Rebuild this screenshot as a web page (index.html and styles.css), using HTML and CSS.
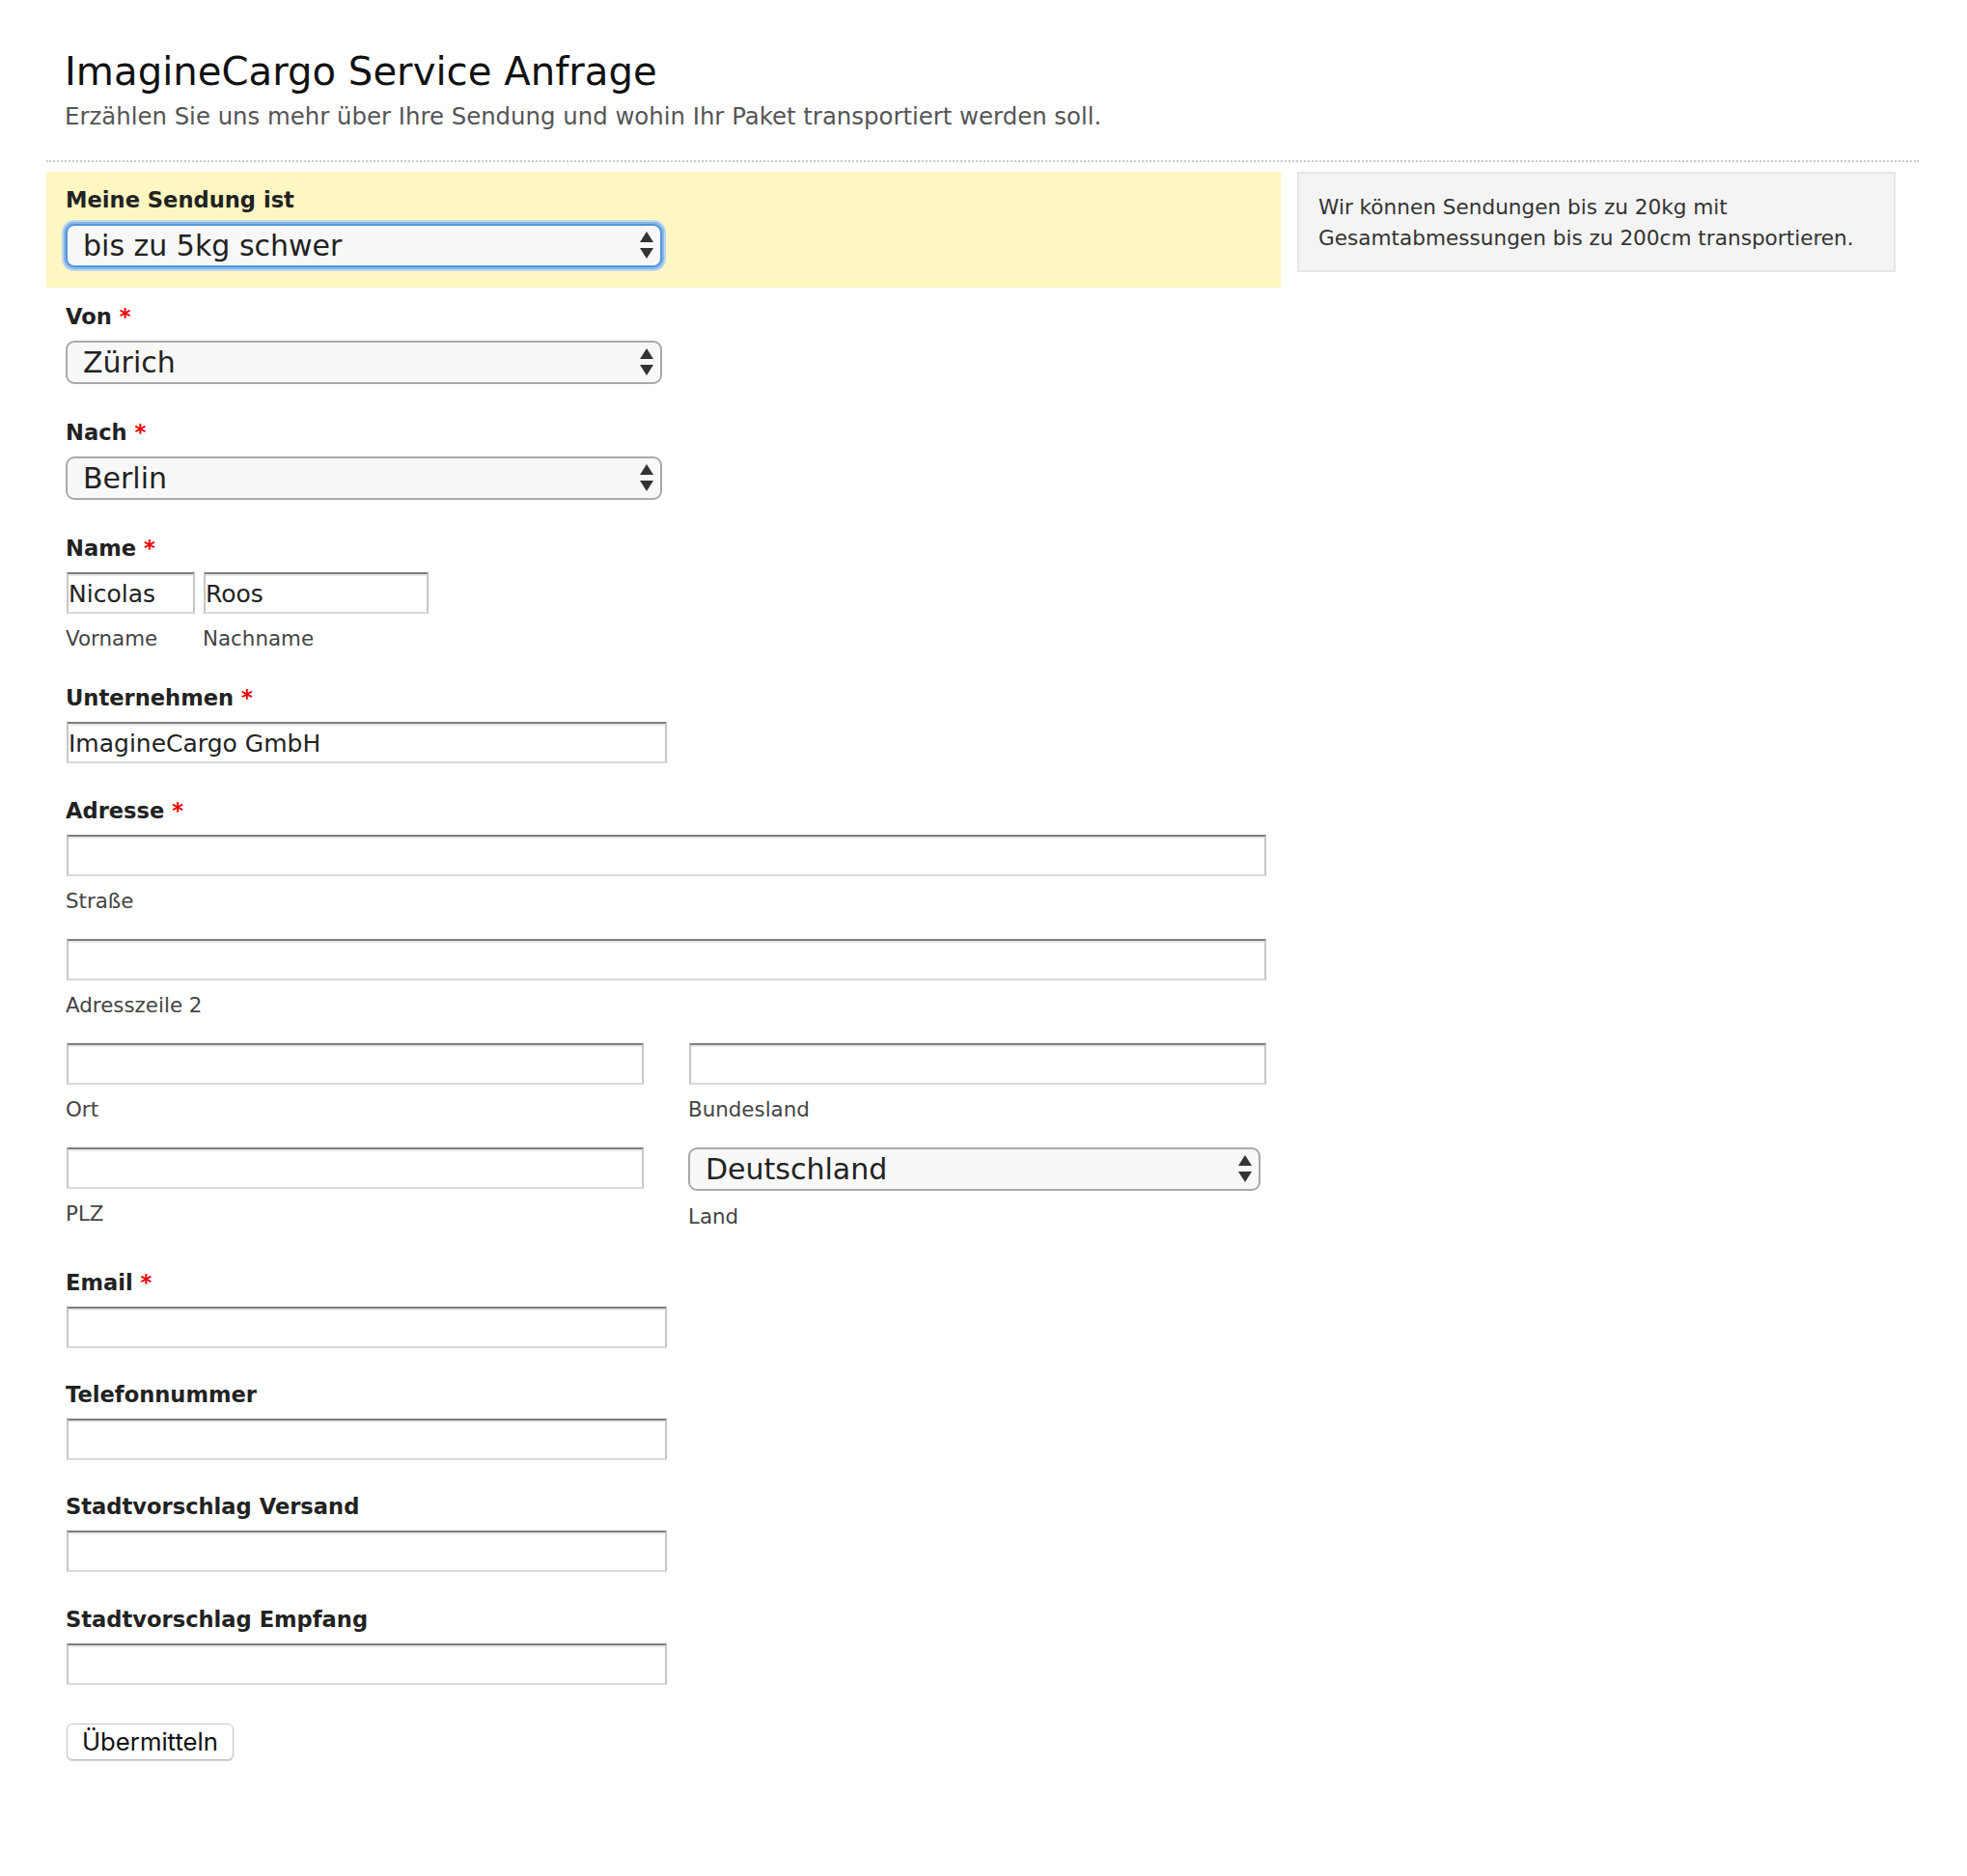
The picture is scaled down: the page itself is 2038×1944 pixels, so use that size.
FILE: index.html
```html
<!DOCTYPE html>
<html lang="de">
<head>
<meta charset="utf-8">
<title>ImagineCargo Service Anfrage</title>
<link rel="stylesheet" href="styles.css">
</head>
<body>
<div class="page">
  <header class="page-head">
    <h1 class="title">ImagineCargo Service Anfrage</h1>
    <p class="subtitle">Erzählen Sie uns mehr über Ihre Sendung und wohin Ihr Paket transportiert werden soll.</p>
  </header>
  <div class="divider"></div>
  <div class="layout">
    <form class="main">
      <div class="field highlight">
        <label class="label" for="weight">Meine Sendung ist</label>
        <span class="select-wrap"><select id="weight" class="select focused"><option>bis zu 5kg schwer</option></select></span>
      </div>

      <div class="field after-select">
        <label class="label" for="from">Von <span class="req">*</span></label>
        <span class="select-wrap"><select id="from" class="select"><option>Zürich</option></select></span>
      </div>

      <div class="field after-select">
        <label class="label" for="to">Nach <span class="req">*</span></label>
        <span class="select-wrap"><select id="to" class="select"><option>Berlin</option></select></span>
      </div>

      <div class="field name-field">
        <label class="label" for="first">Name <span class="req">*</span></label>
        <div class="name-row">
          <div class="col">
            <input id="first" class="input w-first" type="text" value="Nicolas">
            <span class="sublabel">Vorname</span>
          </div>
          <div class="col">
            <input id="last" class="input w-last" type="text" value="Roos">
            <span class="sublabel">Nachname</span>
          </div>
        </div>
      </div>

      <div class="field">
        <label class="label" for="company">Unternehmen <span class="req">*</span></label>
        <input id="company" class="input w-md" type="text" value="ImagineCargo GmbH">
      </div>

      <div class="field address">
        <label class="label" for="street">Adresse <span class="req">*</span></label>
        <div class="addr-line">
          <input id="street" class="input w-full" type="text">
          <span class="sublabel">Straße</span>
        </div>
        <div class="addr-line">
          <input id="street2" class="input w-full" type="text">
          <span class="sublabel">Adresszeile 2</span>
        </div>
        <div class="addr-line addr-row">
          <div class="col">
            <input id="city" class="input w-half" type="text">
            <span class="sublabel">Ort</span>
          </div>
          <div class="col">
            <input id="state" class="input w-half" type="text">
            <span class="sublabel">Bundesland</span>
          </div>
        </div>
        <div class="addr-row last">
          <div class="col">
            <input id="zip" class="input w-half" type="text">
            <span class="sublabel">PLZ</span>
          </div>
          <div class="col">
            <span class="select-wrap"><select id="country" class="select w-country"><option>Deutschland</option></select></span>
            <span class="sublabel after-sel">Land</span>
          </div>
        </div>
      </div>

      <div class="field tight">
        <label class="label" for="email">Email <span class="req">*</span></label>
        <input id="email" class="input w-md" type="text">
      </div>

      <div class="field tight">
        <label class="label" for="phone">Telefonnummer</label>
        <input id="phone" class="input w-md" type="text">
      </div>

      <div class="field">
        <label class="label" for="cityfrom">Stadtvorschlag Versand</label>
        <input id="cityfrom" class="input w-md" type="text">
      </div>

      <div class="field last-field">
        <label class="label" for="cityto">Stadtvorschlag Empfang</label>
        <input id="cityto" class="input w-md" type="text">
      </div>

      <div class="actions">
        <button type="button" class="btn">Übermitteln</button>
      </div>
    </form>

    <aside class="help">
      Wir können Sendungen bis zu 20kg mit Gesamtabmessungen bis zu 200cm transportieren.
    </aside>
  </div>
</div>
</body>
</html>
```

FILE: styles.css
```css
html, body {
  margin: 0;
  padding: 0;
  background: #ffffff;
}

body {
  font-family: "DejaVu Sans", "Noto Sans", sans-serif;
  color: #222222;
}

.page {
  padding: 0 50px 60px 48px;
}

.page-head {
  padding: 50px 0 0 19px;
}

.title {
  margin: 0;
  font-size: 40.2px;
  line-height: 48px;
  font-weight: normal;
  color: #111111;
}

.subtitle {
  margin: 8px 0 0;
  font-size: 24.4px;
  line-height: 30px;
  color: #555555;
}

.divider {
  margin-top: 30px;
  border-top: 2px dotted #c8c8c8;
}

.layout {
  display: flex;
  align-items: flex-start;
  gap: 17px;
  margin-top: 10px;
}

.main {
  width: 1279px;
  margin: 0;
}

.help {
  box-sizing: border-box;
  width: 620px;
  padding: 19px 16px 17px 20px;
  background: #f4f4f4;
  border: 2px solid #e6e6e6;
  font-size: 21.6px;
  line-height: 32px;
  color: #333333;
}

.field {
  padding-left: 20px;
  margin-bottom: 35px;
}

.field.after-select {
  margin-bottom: 36px;
}

.field.name-field {
  margin-bottom: 34px;
}

.field.tight {
  margin-bottom: 34px;
}

.field.address {
  margin-bottom: 41px;
}

.field.last-field {
  margin-bottom: 40px;
}

.field.highlight {
  background: #fff7c1;
  padding: 15px 0 21px 20px;
  margin-bottom: 16px;
}

.label {
  display: block;
  font-size: 22.6px;
  line-height: 29px;
  font-weight: bold;
  color: #222222;
  margin-bottom: 10px;
}

.req {
  color: #ee0000;
}

.select-wrap {
  position: relative;
  display: inline-block;
  vertical-align: top;
}

.select-wrap::before,
.select-wrap::after {
  content: "";
  position: absolute;
  right: 9px;
  width: 0;
  height: 0;
  border-left: 7.5px solid transparent;
  border-right: 7.5px solid transparent;
  pointer-events: none;
}

.select-wrap::before {
  top: 8px;
  border-bottom: 11px solid #333333;
}

.select-wrap::after {
  top: 25px;
  border-top: 11px solid #333333;
}

.select {
  -webkit-appearance: none;
  appearance: none;
  box-sizing: border-box;
  display: block;
  width: 618px;
  height: 45px;
  margin: 0;
  padding: 0 40px 0 16px;
  font-family: "DejaVu Sans", "Noto Sans", sans-serif;
  font-size: 30px;
  color: #222222;
  background: #f8f8f8;
  border: 2px solid #a9a9a9;
  border-radius: 9px;
  outline: none;
}

.select.focused {
  border-color: #5596dc;
  box-shadow: 0 0 0 2px #86b6ea, 0 0 0 4px #bcd6ee;
}

.select.w-country {
  width: 593px;
}

.input {
  box-sizing: border-box;
  display: block;
  height: 43px;
  margin: 0 0 0 1px;
  padding: 2px 0 0 0;
  font-family: "DejaVu Sans", "Noto Sans", sans-serif;
  font-size: 25px;
  color: #222222;
  background: #ffffff;
  border: 2px solid #c6c6c6;
  border-top-color: #7d7d7d;
  border-bottom-color: #dadada;
  box-shadow: inset 0 2px 0 #e9e9e9;
  border-radius: 0;
  outline: none;
}

.w-first { width: 133px; }
.w-last { width: 233px; }
.w-md { width: 622px; }
.w-full { width: 1243px; }
.w-half { width: 598px; }

.name-row,
.addr-row {
  display: flex;
  align-items: flex-start;
}

.name-row { gap: 8px; }
.addr-row { gap: 46px; }

.col {
  display: flex;
  flex-direction: column;
  align-items: flex-start;
}

.sublabel {
  display: block;
  font-size: 21.4px;
  line-height: 27px;
  color: #444444;
  margin-top: 12px;
}

.sublabel.after-sel {
  margin-top: 12.5px;
}

.addr-line {
  margin-bottom: 26px;
}

.actions {
  padding-left: 20px;
}

.btn {
  box-sizing: border-box;
  height: 38px;
  margin: 0 0 0 1px;
  padding: 0 15px;
  font-family: "Inter", "Liberation Sans", sans-serif;
  font-size: 25.7px;
  line-height: 36px;
  color: #111111;
  background: #ffffff;
  border: 1px solid #c4c4c4;
  border-radius: 6px;
  box-shadow: 0 1px 1px rgba(0, 0, 0, 0.18);
}
```
